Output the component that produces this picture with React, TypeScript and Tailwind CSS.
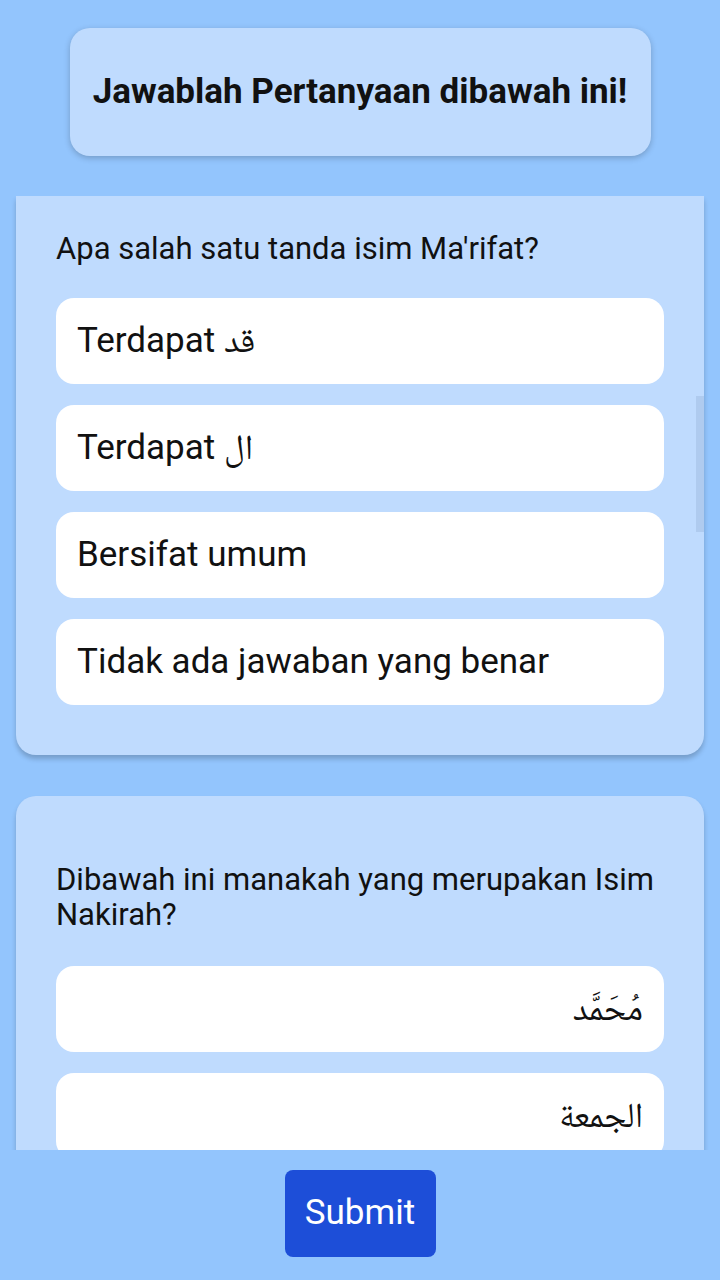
import React from 'react';

const font = { fontFamily: "Roboto, 'Noto Naskh Arabic', 'Noto Sans Arabic', 'DejaVu Sans', sans-serif" };

type Question = {
  text: string;
  options: string[];
  rtl?: boolean;
};

const questions: Question[] = [
  {
    text: "Apa salah satu tanda isim Ma'rifat?",
    options: ['Terdapat قد', 'Terdapat ال', 'Bersifat umum', 'Tidak ada jawaban yang benar'],
  },
  {
    text: 'Dibawah ini manakah yang merupakan Isim Nakirah?',
    options: ['مُحَمَّد', 'الجمعة'],
    rtl: true,
  },
];

function Option({ label, rtl }: { label: string; rtl?: boolean }) {
  return (
    <div
      className={`flex h-[86px] shrink-0 items-center rounded-[18px] bg-white px-[21px] text-[35px] text-[#111] ${
        rtl ? 'justify-end' : 'justify-start'
      }`}
    >
      <span dir="auto">{label}</span>
    </div>
  );
}

export default function App() {
  return (
    <div className="flex h-[1280px] w-[720px] flex-col overflow-hidden bg-[#93c5fd]" style={font}>
      {/* Header */}
      <div className="flex shrink-0 justify-center pt-[28px]">
        <div className="flex h-[128px] w-[581px] items-center justify-center rounded-[20px] bg-[#bfdbfe] shadow-[0_2px_6px_rgba(0,0,0,0.22)]">
          <h1 className="text-[35px] font-bold text-[#111]">Jawablah Pertanyaan dibawah ini!</h1>
        </div>
      </div>

      {/* Scrollable question list */}
      <div className="relative mt-[40px] h-[954px] shrink-0 overflow-hidden px-4">
        <div className="flex flex-col gap-[41px]">
          {/* first card, scrolled so its top is hidden */}
          <div className="flex flex-col rounded-b-[20px] bg-[#bfdbfe] px-10 pb-[50px] pt-[35px] shadow-[0_4px_5px_rgba(0,0,0,0.2)]">
            <p className="mb-[32px] text-[31px] leading-[35px] text-[#111]">{questions[0].text}</p>
            <div className="flex flex-col gap-[21px]">
              {questions[0].options.map((o) => (
                <Option key={o} label={o} />
              ))}
            </div>
          </div>

          <div className="flex flex-col rounded-[20px] bg-[#bfdbfe] px-10 pb-[50px] pt-[66px] shadow-[0_4px_5px_rgba(0,0,0,0.2)]">
            <p className="mb-[34px] text-[31px] leading-[35px] text-[#111]">{questions[1].text}</p>
            <div className="flex flex-col gap-[21px]">
              {questions[1].options.map((o) => (
                <Option key={o} label={o} rtl />
              ))}
            </div>
          </div>
        </div>

        {/* scrollbar thumb */}
        <div className="absolute right-4 top-[200px] h-[136px] w-[8px] bg-[#afcbef]" />
      </div>

      {/* Footer */}
      <div className="flex flex-1 justify-center pt-[20px]">
        <button className="h-[87px] w-[151px] rounded-[8px] bg-[#1d4ed8] text-[35px] text-white">Submit</button>
      </div>
    </div>
  );
}
